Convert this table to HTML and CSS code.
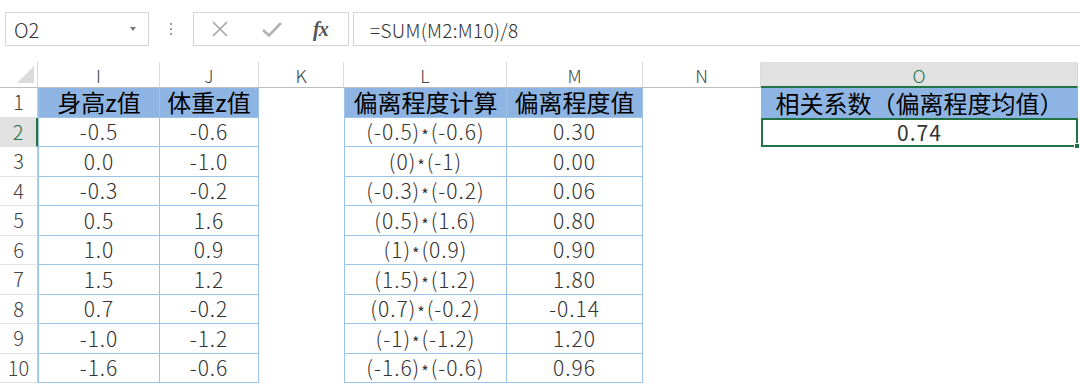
FILE: index.html
```html
<!DOCTYPE html>
<html lang="zh">
<head>
<meta charset="utf-8">
<title>相关系数</title>
<link rel="stylesheet" href="styles.css">
</head>
<body>
<div class="toolbar">
  <div class="namebox"><span class="ref">O2</span><span class="caret"></span></div>
  <div class="dots"><i></i><i></i><i></i></div>
  <div class="fxbox">
    <svg class="ic-x" width="18" height="18" viewBox="0 0 18 18"><path d="M2 2L16 16M16 2L2 16" stroke="#a6a6a6" stroke-width="1.6" fill="none"/></svg>
    <svg class="ic-ok" width="22" height="18" viewBox="0 0 22 18"><path d="M2 10L8 15.5L20 3" stroke="#b3b3b3" stroke-width="2.6" fill="none"/></svg>
    <span class="fx">fx</span>
  </div>
  <div class="formula">=SUM(M2:M10)/8</div>
</div>

<div class="sheet">
  <div class="corner"><span class="tri"></span></div>
  <div class="ch">I</div>
  <div class="ch">J</div>
  <div class="ch">K</div>
  <div class="ch">L</div>
  <div class="ch">M</div>
  <div class="ch">N</div>
  <div class="ch ch-sel">O</div>

  <div class="rn">1</div>
  <div class="c hd first">身高z值</div>
  <div class="c hd">体重z值</div>
  <div class="c"></div>
  <div class="c hd first">偏离程度计算</div>
  <div class="c hd">偏离程度值</div>
  <div class="c"></div>
  <div class="c hd hd-o">相关系数（偏离程度均值）</div>

  <div class="rn rn-sel">2</div>
  <div class="c d first">-0.5</div><div class="c d">-0.6</div><div class="c"></div>
  <div class="c d first"><span>(-0.5)<span class="star">*</span>(-0.6)</span></div><div class="c d">0.30</div><div class="c"></div>
  <div class="c sel">0.74<span class="handle"></span></div>

  <div class="rn">3</div>
  <div class="c d first">0.0</div><div class="c d">-1.0</div><div class="c"></div>
  <div class="c d first"><span>(0)<span class="star">*</span>(-1)</span></div><div class="c d">0.00</div><div class="c"></div><div class="c"></div>

  <div class="rn">4</div>
  <div class="c d first">-0.3</div><div class="c d">-0.2</div><div class="c"></div>
  <div class="c d first"><span>(-0.3)<span class="star">*</span>(-0.2)</span></div><div class="c d">0.06</div><div class="c"></div><div class="c"></div>

  <div class="rn">5</div>
  <div class="c d first">0.5</div><div class="c d">1.6</div><div class="c"></div>
  <div class="c d first"><span>(0.5)<span class="star">*</span>(1.6)</span></div><div class="c d">0.80</div><div class="c"></div><div class="c"></div>

  <div class="rn">6</div>
  <div class="c d first">1.0</div><div class="c d">0.9</div><div class="c"></div>
  <div class="c d first"><span>(1)<span class="star">*</span>(0.9)</span></div><div class="c d">0.90</div><div class="c"></div><div class="c"></div>

  <div class="rn">7</div>
  <div class="c d first">1.5</div><div class="c d">1.2</div><div class="c"></div>
  <div class="c d first"><span>(1.5)<span class="star">*</span>(1.2)</span></div><div class="c d">1.80</div><div class="c"></div><div class="c"></div>

  <div class="rn">8</div>
  <div class="c d first">0.7</div><div class="c d">-0.2</div><div class="c"></div>
  <div class="c d first"><span>(0.7)<span class="star">*</span>(-0.2)</span></div><div class="c d">-0.14</div><div class="c"></div><div class="c"></div>

  <div class="rn">9</div>
  <div class="c d first">-1.0</div><div class="c d">-1.2</div><div class="c"></div>
  <div class="c d first"><span>(-1)<span class="star">*</span>(-1.2)</span></div><div class="c d">1.20</div><div class="c"></div><div class="c"></div>

  <div class="rn">10</div>
  <div class="c d first">-1.6</div><div class="c d">-0.6</div><div class="c"></div>
  <div class="c d first"><span>(-1.6)<span class="star">*</span>(-0.6)</span></div><div class="c d">0.96</div><div class="c"></div><div class="c"></div>
</div>
</body>
</html>
```

FILE: styles.css
```css
* { box-sizing: border-box; }
html, body {
  margin: 0;
  padding: 0;
  background: #ffffff;
  width: 1080px;
  height: 385px;
  overflow: hidden;
  font-family: "Noto Sans CJK SC", "Noto Sans", sans-serif;
}

/* ---------- formula bar ---------- */
.toolbar {
  height: 62px;
  display: flex;
  align-items: flex-start;
  padding-top: 12px;
}
.namebox {
  margin-left: 5px;
  width: 144px;
  height: 34px;
  border: 1px solid #d6d6d6;
  display: flex;
  align-items: center;
  justify-content: space-between;
  padding: 0 12px 0 8px;
  font-size: 20px;
  font-weight: 300;
  color: #333;
}
.caret {
  width: 0;
  height: 0;
  border-left: 3.5px solid transparent;
  border-right: 3.5px solid transparent;
  border-top: 4px solid #777;
}
.dots {
  width: 44px;
  height: 34px;
  display: flex;
  flex-direction: column;
  align-items: center;
  justify-content: center;
  gap: 3px;
}
.dots i {
  display: block;
  width: 2px;
  height: 2px;
  background: #9a9a9a;
}
.fxbox {
  width: 156px;
  height: 34px;
  border: 1px solid #d6d6d6;
  display: flex;
  align-items: center;
  padding-left: 17px;
}
.ic-x { margin-right: 32px; }
.ic-ok { margin-right: 30px; }
.fx {
  font-family: "Liberation Serif", "DejaVu Serif", serif;
  font-style: italic;
  font-weight: bold;
  font-size: 20px;
  color: #555;
  letter-spacing: -1px;
}
.formula {
  flex: 1;
  height: 34px;
  margin-left: 4px;
  margin-right: -2px;
  border: 1px solid #d6d6d6;
  display: flex;
  align-items: center;
  padding-left: 16px;
  font-size: 19px;
  font-weight: 300;
  color: #333;
  letter-spacing: 0.3px;
}

/* ---------- sheet ---------- */
.sheet {
  display: grid;
  grid-template-columns: 38px 122px 99px 85px 163px 136px 118px 317px;
  grid-template-rows: 26px repeat(10, 29.5px);
}
.corner {
  border-right: 1px solid #d9d9d9;
  border-bottom: 1px solid #bdbdbd;
  display: flex;
  align-items: flex-end;
  justify-content: flex-end;
  padding: 0 3px 4px 0;
}
.tri {
  width: 0;
  height: 0;
  border-left: 17px solid transparent;
  border-bottom: 17px solid #dcdcdc;
}
.ch {
  border-right: 1px solid #dadada;
  border-bottom: 1px solid #bdbdbd;
  display: flex;
  align-items: center;
  justify-content: center;
  font-size: 18px;
  font-weight: 300;
  line-height: 1;
  padding-top: 1px;
  color: #444;
}
.ch-sel {
  background: #e1e1e1;
  color: #217346;
  border-bottom: 2px solid #217346;
}
.rn {
  border-right: 1px solid #c9c9c9;
  border-bottom: 1px solid #e3e3e3;
  display: flex;
  align-items: center;
  justify-content: center;
  font-size: 20px;
  font-weight: 300;
  line-height: 1;
  color: #444;
}
.rn-sel {
  background: #e1e1e1;
  color: #217346;
  border-right: 2px solid #217346;
}
.c {
  display: flex;
  align-items: center;
  justify-content: center;
  white-space: nowrap;
  font-size: 21px;
  font-weight: 300;
  color: #333;
  line-height: 1.1;
}
.d {
  border-right: 1px solid #9cc3e8;
  border-bottom: 1px solid #9cc3e8;
  letter-spacing: 1px;
}
.first { border-left: 1px solid #9cc3e8; }
.hd {
  background: #8db4e3;
  border-right: 1px solid #9cc3e8;
  border-bottom: 1px solid #9cc3e8;
  font-size: 24px;
  font-weight: 400;
  line-height: 1;
  color: #000;
}
.hd-o {
  border-left: none;
  border-right: none;
  border-bottom: none;
}
.star {
  font-size: 16px;
  font-weight: 400;
  line-height: 0;
  margin: 0 1px;
  vertical-align: -2px;
}
.sel {
  border: 2px solid #217346;
  letter-spacing: 1px;
  font-weight: 400;
  position: relative;
}
.handle {
  position: absolute;
  right: -4px;
  bottom: -4px;
  width: 6px;
  height: 6px;
  background: #217346;
  border: 1px solid #fff;
}
```
